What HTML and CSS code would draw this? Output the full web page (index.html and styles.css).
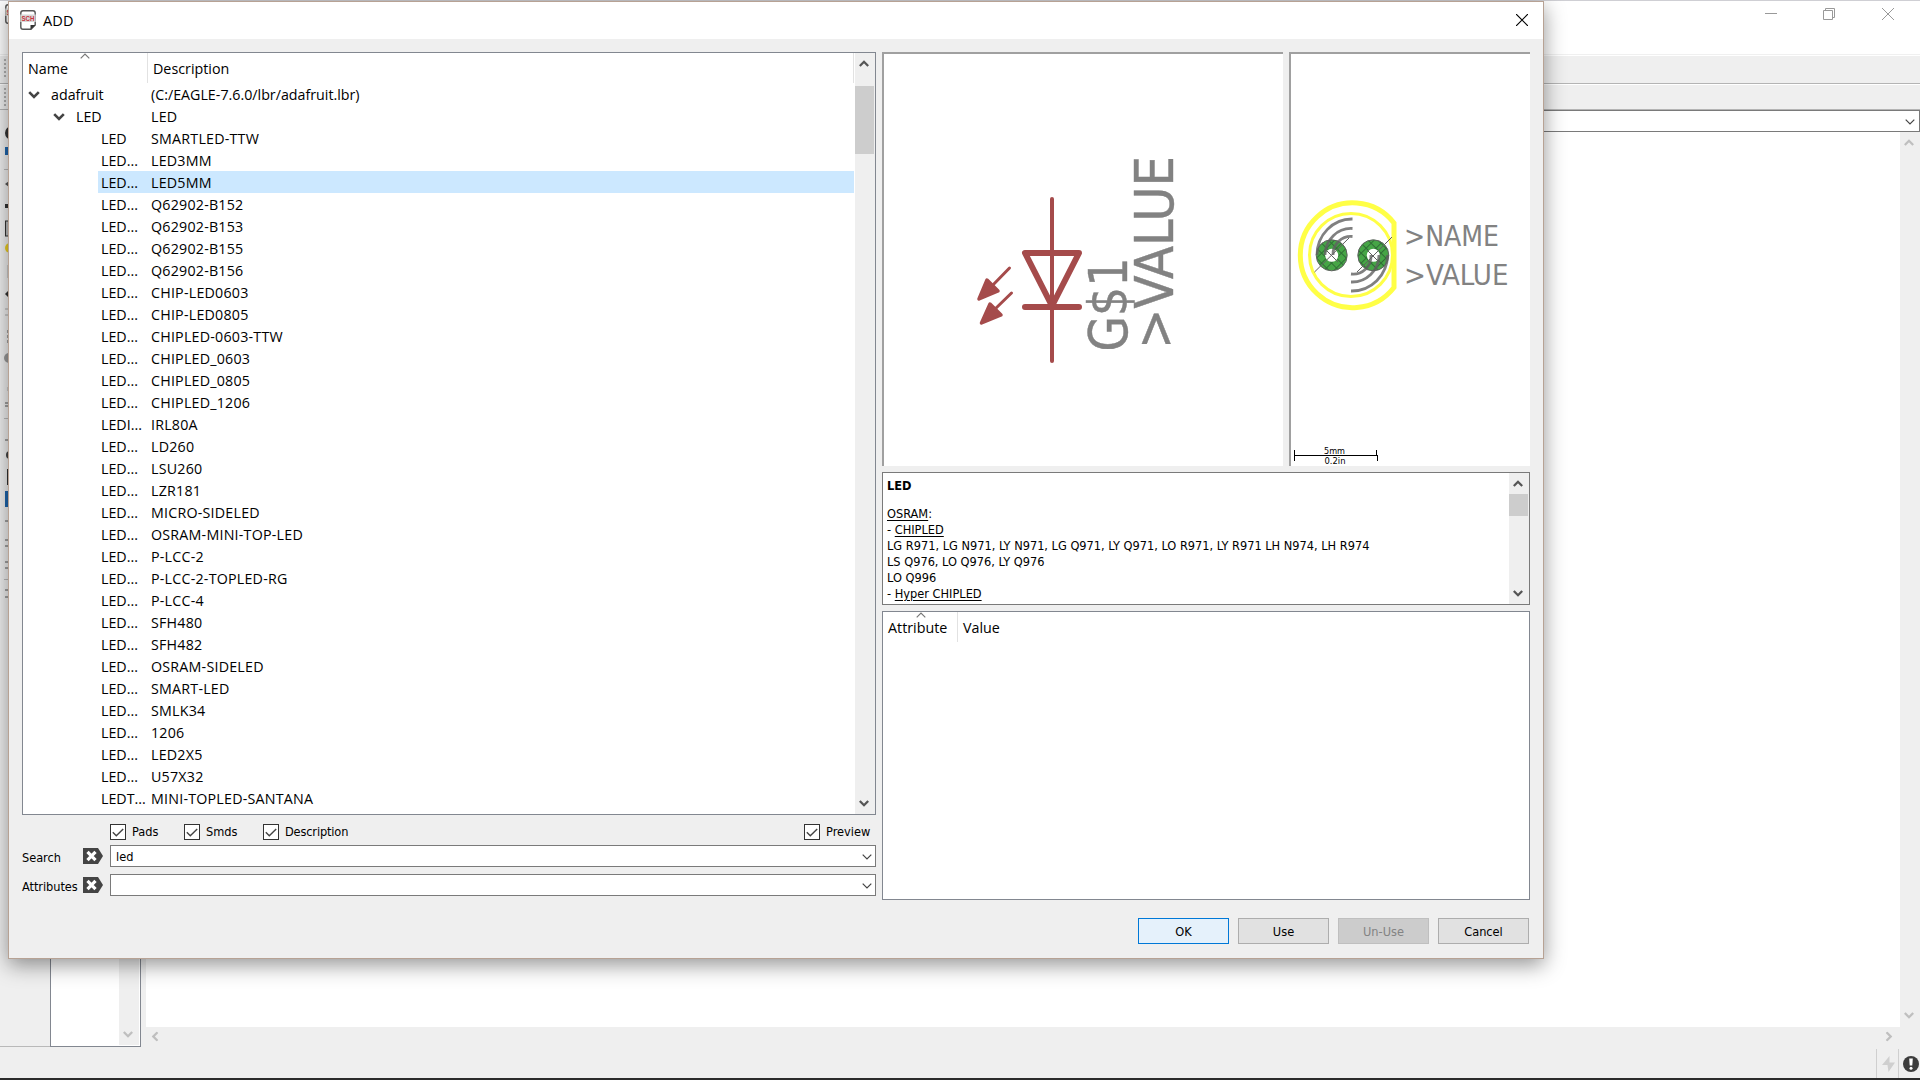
FILE: index.html
```html
<!DOCTYPE html>
<html lang="en">
<head>
<meta charset="utf-8">
<title>ADD</title>
<link rel="stylesheet" href="styles.css">
</head>
<body>
<svg width="0" height="0" class="defs">
  <symbol id="chev" viewBox="0 0 10 7"><path d="M0.8 1 L5 5.2 L9.2 1" fill="none" stroke="currentColor" stroke-width="2.3"/></symbol>
  <symbol id="thin" viewBox="0 0 10 6"><path d="M0.7 0.7 L5 5 L9.3 0.7" fill="none" stroke="currentColor" stroke-width="1.2"/></symbol>
  <symbol id="check" viewBox="0 0 12 9"><path d="M0.8 4.3 L4.3 7.8 L11.2 0.9" fill="none" stroke="#444" stroke-width="1.4"/></symbol>
  <symbol id="clear" viewBox="0 0 20 16"><path d="M0 0H15L20 8L15 16H0Z" fill="#444"/><path d="M4.5 3.8L12.5 12.2M12.5 3.8L4.5 12.2" stroke="#fff" stroke-width="3.2"/></symbol>
  <symbol id="sch" viewBox="0 0 16 20"><path d="M3 .8H13Q15.2 .8 15.2 3V15L11 19.2H3Q.8 19.2 .8 17V3Q.8 .8 3 .8Z" fill="#fff" stroke="#555" stroke-width="1.4"/><path d="M10.5 19.5V15H15.5Z" fill="#333"/><rect x=".3" y="4.5" width="15.4" height="7.500" fill="#d6d6d6"/><text x="1.500" y="11.200" textLength="13" lengthAdjust="spacingAndGlyphs" class="sch-text">SCH</text></symbol>
</svg>

<main class="window">
  <header class="win-title">
    <svg class="win-icon" width="16" height="20"><use href="#sch"/></svg>
    <svg class="win-ctl" width="132" height="14">
      <path d="M0 6.5H12" stroke="#999"/>
      <path d="M58.500 3.500h9v9h-9zM60.500 3V1.500h9v9H68" fill="none" stroke="#999"/>
      <path d="M117 1L129 13M129 1L117 13" stroke="#999"/>
    </svg>
  </header>
  <div class="toolbar first"><span class="grip"></span></div>
  <div class="toolbar second"><span class="grip"></span></div>
  <div class="work">
    <aside class="tools">
      <svg width="12" height="500">
        <circle cx="12" cy="23" r="7" fill="#333"/><rect x="5" y="37" width="7" height="8" fill="#1f66ad"/>
        <path d="M4 59.500H12M4 308.500H12M4 469.500H12" stroke="#bbb"/>
        <path d="M5 74l4-3v6z" fill="#555"/><rect x="5" y="94" width="6" height="4" fill="#333"/>
        <rect x="5.500" y="111" width="8" height="15" fill="#bbb" stroke="#333"/><circle cx="10" cy="138" r="5" fill="#edcf20"/>
        <path d="M8 155V168M5 199H9M5 205H9M8 277V281" stroke="#aaa"/><path d="M5 184l4-4v8z" fill="#333"/>
        <path d="M8 220V233" stroke="#555" stroke-dasharray="3 2"/><circle cx="9" cy="248" r="5" fill="#999"/>
        <path d="M5 293H9M5 296H9M5 330H9M5 411H9M5 430H9M5 436H9M5 452H9M5 458H9M5 480H9M5 487H9" stroke="#555"/>
        <circle cx="10" cy="345" r="4" fill="#444"/><path d="M8 359V375" stroke="#333" stroke-width="2"/><rect x="5" y="381" width="7" height="16" fill="#1f66ad"/>
      </svg>
    </aside>
    <aside class="sheets"><div class="sheet-bar"><svg class="pale" width="10" height="7"><use href="#chev"/></svg></div></aside>
    <section class="editor">
      <div class="command"><svg width="10" height="6"><use href="#thin"/></svg></div>
      <div class="canvas-row">
        <div class="canvas"></div>
        <div class="vbar"><svg class="pale flip" width="10" height="7"><use href="#chev"/></svg><svg class="pale" width="10" height="7"><use href="#chev"/></svg></div>
      </div>
      <div class="hbar"><svg class="pale left" width="10" height="7"><use href="#chev"/></svg><svg class="pale right" width="10" height="7"><use href="#chev"/></svg></div>
    </section>
  </div>
  <footer class="status">
    <div class="cell"><svg width="13" height="16"><path d="M7.500 0L0 9H5.500L6.500 16L13 6.500H7.500Z" fill="#cfcfcf"/></svg></div>
    <div class="cell last"><svg width="16" height="16"><circle cx="8" cy="8" r="8" fill="#3c3c3c"/><path d="M6.200 2.500h3.600l-.5 7h-2.600z" fill="#fff"/><circle cx="8" cy="12.300" r="1.500" fill="#fff"/></svg></div>
  </footer>
  <div class="taskbar"></div>
</main>

<section class="dialog">
  <header class="title">
    <svg width="16" height="20"><use href="#sch"/></svg><span>ADD</span>
    <svg class="close" width="12" height="12"><path d="M0 0L12 12M12 0L0 12" stroke="#000" stroke-width="1.200"/></svg>
  </header>
  <div class="body">
    <div class="left-col">
      <div class="tree">
        <div class="tree-main">
          <div class="head"><div class="h-name">Name<svg class="sort" width="10" height="6"><use href="#thin"/></svg></div><div class="h-desc">Description</div></div>
          <div class="rows">
            <div class="row l0"><svg width="12" height="8"><use href="#chev"/></svg><b>adafruit</b><span>(C:/EAGLE-7.6.0/lbr/adafruit.lbr)</span></div>
            <div class="row l1"><svg width="12" height="8"><use href="#chev"/></svg><b>LED</b><span>LED</span></div>
            <div class="row"><b>LED</b><span>SMARTLED-TTW</span></div>
            <div class="row"><b>LED...</b><span>LED3MM</span></div>
            <div class="row selected"><b>LED...</b><span>LED5MM</span></div>
            <div class="row"><b>LED...</b><span>Q62902-B152</span></div>
            <div class="row"><b>LED...</b><span>Q62902-B153</span></div>
            <div class="row"><b>LED...</b><span>Q62902-B155</span></div>
            <div class="row"><b>LED...</b><span>Q62902-B156</span></div>
            <div class="row"><b>LED...</b><span>CHIP-LED0603</span></div>
            <div class="row"><b>LED...</b><span>CHIP-LED0805</span></div>
            <div class="row"><b>LED...</b><span>CHIPLED-0603-TTW</span></div>
            <div class="row"><b>LED...</b><span>CHIPLED_0603</span></div>
            <div class="row"><b>LED...</b><span>CHIPLED_0805</span></div>
            <div class="row"><b>LED...</b><span>CHIPLED_1206</span></div>
            <div class="row"><b>LEDI...</b><span>IRL80A</span></div>
            <div class="row"><b>LED...</b><span>LD260</span></div>
            <div class="row"><b>LED...</b><span>LSU260</span></div>
            <div class="row"><b>LED...</b><span>LZR181</span></div>
            <div class="row"><b>LED...</b><span>MICRO-SIDELED</span></div>
            <div class="row"><b>LED...</b><span>OSRAM-MINI-TOP-LED</span></div>
            <div class="row"><b>LED...</b><span>P-LCC-2</span></div>
            <div class="row"><b>LED...</b><span>P-LCC-2-TOPLED-RG</span></div>
            <div class="row"><b>LED...</b><span>P-LCC-4</span></div>
            <div class="row"><b>LED...</b><span>SFH480</span></div>
            <div class="row"><b>LED...</b><span>SFH482</span></div>
            <div class="row"><b>LED...</b><span>OSRAM-SIDELED</span></div>
            <div class="row"><b>LED...</b><span>SMART-LED</span></div>
            <div class="row"><b>LED...</b><span>SMLK34</span></div>
            <div class="row"><b>LED...</b><span>1206</span></div>
            <div class="row"><b>LED...</b><span>LED2X5</span></div>
            <div class="row"><b>LED...</b><span>U57X32</span></div>
            <div class="row"><b>LEDT...</b><span>MINI-TOPLED-SANTANA</span></div>
          </div>
        </div>
        <div class="scroll tree-scroll"><svg class="flip" width="10" height="7"><use href="#chev"/></svg><i></i><svg width="10" height="7"><use href="#chev"/></svg></div>
      </div>
      <div class="checks">
        <label class="pads"><i><svg width="12" height="9"><use href="#check"/></svg></i>Pads</label>
        <label class="smds"><i><svg width="12" height="9"><use href="#check"/></svg></i>Smds</label>
        <label class="descr"><i><svg width="12" height="9"><use href="#check"/></svg></i>Description</label>
        <label class="prev"><i><svg width="12" height="9"><use href="#check"/></svg></i>Preview</label>
      </div>
      <div class="field"><span>Search</span><svg width="20" height="16"><use href="#clear"/></svg><div class="combo">led<svg width="10" height="6"><use href="#thin"/></svg></div></div>
      <div class="field"><span>Attributes</span><svg width="20" height="16"><use href="#clear"/></svg><div class="combo"><svg width="10" height="6"><use href="#thin"/></svg></div></div>
    </div>
    <div class="right-col">
      <div class="previews">
        <div class="view symbol">
          <svg viewBox="884 54 399 412" width="399" height="412">
            <g fill="none" stroke="#a54b4b" stroke-linecap="round" stroke-linejoin="round">
              <path d="M1052 199V361" stroke-width="4"/>
              <path d="M1025 253H1079L1052 306ZM1025 307H1079" stroke-width="6"/>
              <path d="M1009.500 268L990 288M1011.500 293L993 311" stroke-width="3"/>
              <path d="M979 299L987 280L998 291ZM981.500 323L990 304L1001 315Z" fill="#a54b4b" stroke-width="3.500"/>
            </g>
            <g class="sym-text">
              <text transform="translate(1127 351.500) rotate(-90)" textLength="94" lengthAdjust="spacingAndGlyphs">G$1</text>
              <text transform="translate(1173 349) rotate(-90)" textLength="193" lengthAdjust="spacingAndGlyphs">&gt;VALUE</text>
            </g>
          </svg>
        </div>
        <div class="view board">
          <svg viewBox="1291 54 239 412" width="239" height="412">
            <defs>
              <pattern id="hatch" width="7" height="7" patternUnits="userSpaceOnUse" patternTransform="rotate(45)"><rect width="7" height="7" fill="#46a546"/><path d="M0 .5H7M.5 0V7" stroke="#2f6e35" stroke-width="1"/></pattern>
            </defs>
            <path d="M1394 223A52.400 52.400 0 1 0 1394 287.500Z" fill="none" stroke="#ffff46" stroke-width="5"/>
            <circle cx="1351" cy="255" r="41.500" fill="none" stroke="#ffff46" stroke-width="3"/>
            <g fill="none" stroke="#5f5f5f">
              <g fill="url(#hatch)"><circle cx="1331.700" cy="255.300" r="15.500"/><circle cx="1373.300" cy="255.300" r="15.500"/></g>
              <g fill="#fff" stroke="none"><circle cx="1331.700" cy="255.300" r="6.500"/><circle cx="1373.300" cy="255.300" r="6.500"/></g>
              <path d="M1314.500 272L1349 238M1357 272L1392 237M1326 250L1338 262M1367 250L1379 262"/>
            </g>
            <g fill="none" stroke="#606060" stroke-opacity=".8" stroke-width="2.800">
              <path d="M1352.500 219A35 36 0 0 0 1317 255M1352.500 228.500A26 27 0 0 0 1325 255M1352.500 236.500A18 18 0 0 0 1333 255"/>
              <path d="M1351 291A36 36 0 0 0 1387.500 255M1351 282A27 27 0 0 0 1379 255M1351 274A18 18 0 0 0 1371 255"/>
            </g>
            <g class="board-text">
              <text x="1404" y="246" textLength="95" lengthAdjust="spacingAndGlyphs">&gt;NAME</text>
              <text x="1404" y="285" textLength="104.500" lengthAdjust="spacingAndGlyphs">&gt;VALUE</text>
            </g>
            <path d="M1294.500 450V461M1294 455.500H1378M1376.500 450V456M1377.500 455V461" fill="none" stroke="#000"/>
            <g class="scale-text">
              <text x="1324" y="454" textLength="21" lengthAdjust="spacingAndGlyphs">5mm</text>
              <text x="1324.500" y="464" textLength="21" lengthAdjust="spacingAndGlyphs">0.2in</text>
            </g>
          </svg>
        </div>
      </div>
      <div class="desc">
        <div class="desc-text">
          <p class="bold">LED</p>
          <p><u>OSRAM</u>:</p>
          <p>- <u>CHIPLED</u></p>
          <p>LG R971, LG N971, LY N971, LG Q971, LY Q971, LO R971, LY R971 LH N974, LH R974</p>
          <p>LS Q976, LO Q976, LY Q976</p>
          <p>LO Q996</p>
          <p>- <u>Hyper CHIPLED</u></p>
        </div>
        <div class="scroll desc-scroll"><svg class="flip" width="10" height="7"><use href="#chev"/></svg><i></i><svg width="10" height="7"><use href="#chev"/></svg></div>
      </div>
      <div class="attrs"><div class="head"><div class="h-attr">Attribute<svg class="sort" width="10" height="6"><use href="#thin"/></svg></div><div class="h-value">Value</div></div></div>
    </div>
  </div>
  <footer class="buttons"><button class="ok">OK</button><button>Use</button><button class="off">Un-Use</button><button>Cancel</button></footer>
</section>
</body>
</html>
```
FILE: styles.css
```css
* { box-sizing: border-box; }
body { margin: 0; width: 1920px; height: 1080px; overflow: hidden; position: relative; background: #efefef; color: #000; font: 12.67px/16px "DejaVu Sans Condensed", "DejaVu Sans", sans-serif; }
svg { display: block; flex: none; }
.defs { position: absolute; }
p { margin: 0; }
.sch-text { font: bold 8px "Liberation Sans", sans-serif; fill: #c8323c; }
.pale { color: #bfbfbf; }
.flip { transform: rotate(180deg); }
.left { transform: rotate(90deg); }
.right { transform: rotate(-90deg); }

/* main window behind the dialog */
.window { width: 1920px; height: 1080px; display: flex; flex-direction: column; background: #efefef; }
.win-title { height: 56px; background: #fff; border-top: 1px solid #cfcfd4; border-bottom: 1px solid #fff; box-shadow: inset 0 -1px #f0f0f0; display: flex; justify-content: space-between; padding: 3px 16px 0 5px; }
.win-ctl { margin: 3px 7px 0 0; }
.toolbar { border-bottom: 1px solid #b4b4b4; padding: 3px 4px; }
.toolbar.first { height: 28px; }
.toolbar.second { height: 26px; border-top: 1px solid #fff; }
.grip { display: block; width: 2px; height: 20px; background: repeating-linear-gradient(#b0b0b0 0 2px, transparent 2px 4px); }
.work { flex: 1; display: flex; min-height: 0; }
.tools { width: 50px; border-bottom: 1px solid #b9b9b9; }
.sheets { width: 91px; background: #fff; border: 1px solid #828790; padding: 0 1px 1px 0; display: flex; justify-content: flex-end; }
.sheet-bar { width: 20px; background: #efefef; display: flex; align-items: flex-end; justify-content: center; padding: 0 2px 7px 0; }
.editor { flex: 1; display: flex; flex-direction: column; padding-left: 5px; }
.command { height: 22px; background: #fff; border: 1px solid #7a7a7a; display: flex; align-items: center; justify-content: flex-end; padding: 1px 4px 0 0; color: #444; }
.canvas-row { flex: 1; display: flex; }
.canvas { flex: 1; background: #fff; }
.vbar { width: 20px; display: flex; flex-direction: column; justify-content: space-between; align-items: center; padding: 7px 2px 8px 0; }
.hbar { height: 20px; display: flex; justify-content: space-between; align-items: center; padding: 0 26px 2px 4px; }
.status { height: 31px; display: flex; justify-content: flex-end; padding-top: 2px; }
.cell { width: 22px; border-left: 1px solid #cfcfcf; padding: 7px 0 0 5px; }
.cell.last { padding-left: 4px; }
.taskbar { height: 2px; background: #2b2b2b; }

/* dialog */
.dialog { position: absolute; left: 8px; top: 1px; width: 1536px; height: 958px; background: #efefef; border: 1px solid #b7a294; box-shadow: 0 6px 20px rgba(0, 0, 0, .42); display: flex; flex-direction: column; }
.title { height: 37px; background: #fff; display: flex; align-items: flex-start; padding: 8px 15px 0 11px; font: 14.5px/20px "Open Sans", sans-serif; }
.title span { margin: 1px 0 0 7px; letter-spacing: .2px; }
.title .close { margin: 4px 0 0 auto; }
.body { height: 861px; padding: 13px 13px 0; display: flex; gap: 6px; }
.left-col { width: 854px; }
.tree { height: 763px; border: 1px solid #828790; background: #fff; display: flex; font: 14.25px/22px "Open Sans", sans-serif; }
.tree-main { width: 832px; overflow: hidden; }
.head { height: 30px; display: flex; font: 14.3px/31px "Open Sans", sans-serif; }
.sort { position: absolute; top: 0; color: #777; transform: rotate(180deg); }
.h-name { position: relative; width: 125px; padding-left: 5px; border-right: 1px solid #e2e2e2; }
.h-name .sort { left: 57px; }
.h-desc { flex: 1; padding-left: 5px; margin-right: 1px; border-right: 1px solid #e2e2e2; }
.row { height: 22px; margin: 0 1px 0 75px; padding: 1px 0 0 3px; display: flex; align-items: center; letter-spacing: .22px; }
.row b { font-weight: normal; width: 50px; white-space: nowrap; letter-spacing: 0; }
.row svg { color: #444; }
.row.l0 { margin-left: 0; padding-left: 5px; letter-spacing: 0; }
.row.l0 svg { margin-right: 11px; }
.row.l0 b { width: 100px; }
.row.l1 { margin-left: 0; padding-left: 30px; }
.row.l1 svg { margin-right: 11px; }
.row.l1 b { width: 75px; }
.selected { background: #cce8ff; }
.scroll { width: 20px; background: #efefef; display: flex; flex-direction: column; align-items: center; color: #555; padding: 7px 2px 7px 0; }
.scroll i { width: 19px; align-self: flex-start; background: #cdcdcd; }
.scroll svg:last-child { margin-top: auto; }
.tree-scroll i { height: 68px; margin-top: 19px; }

.checks { height: 30px; padding: 4px 0 0 88px; display: flex; align-items: center; }
.checks label { display: flex; align-items: center; gap: 6px; }
.checks i { width: 16px; height: 16px; border: 1px solid #333; background: #fff; padding: 3px 1px; }
.pads { width: 74px; }
.smds { width: 79px; }
.descr { flex: 1; letter-spacing: -.15px; }
.prev { width: 72px; }
.field { height: 22px; margin-bottom: 7px; display: flex; align-items: center; }
.field span { width: 61px; padding-top: 4px; letter-spacing: -.05px; }
.field > svg { margin-right: 7px; }
.combo { flex: 1; height: 22px; background: #fff; border: 1px solid #7a7a7a; padding: 1px 3px 0 5px; display: flex; align-items: center; justify-content: space-between; color: #000; }
.combo svg { margin-left: auto; color: #444; }

.right-col { width: 648px; display: flex; flex-direction: column; gap: 6px; }
.previews { height: 414px; display: flex; justify-content: space-between; }
.view { background: #fff; border: solid #a0a0a0; border-width: 2px 0 0 2px; }
.symbol { width: 401px; }
.board { width: 241px; }
.sym-text { font: 53px "DejaVu Sans Condensed", sans-serif; fill: #828282; stroke: #828282; stroke-width: .4px; }
.board-text { font: 28px "DejaVu Sans Condensed", sans-serif; fill: #828282; }
.scale-text { font: 9.5px "DejaVu Sans Condensed", sans-serif; }
.desc { height: 133px; background: #fff; border: 1px solid #7a7a7a; display: flex; }
.desc-text { flex: 1; padding: 5px 4px; white-space: nowrap; }
.desc-text u { text-underline-offset: 2px; }
.bold { font-weight: bold; margin-bottom: 12px; }
.desc-scroll i { height: 22px; margin-top: 7px; }
.attrs { height: 289px; background: #fff; border: 1px solid #828790; }
.h-attr { position: relative; width: 75px; padding-left: 5px; border-right: 1px solid #e2e2e2; }
.h-attr .sort { left: 33px; }
.h-value { padding-left: 5px; }
.buttons { display: flex; justify-content: flex-end; gap: 9px; padding: 18px 14px 0 0; }
.buttons button { width: 91px; height: 26px; padding: 2px 0 0; border: 1px solid #adadad; background: #e1e1e1; color: #000; font: inherit; }
.buttons .ok { border-color: #0078d7; background: #e5f1fb; }
.buttons .off { border-color: #bfbfbf; background: #ccc; color: #838383; }
```
